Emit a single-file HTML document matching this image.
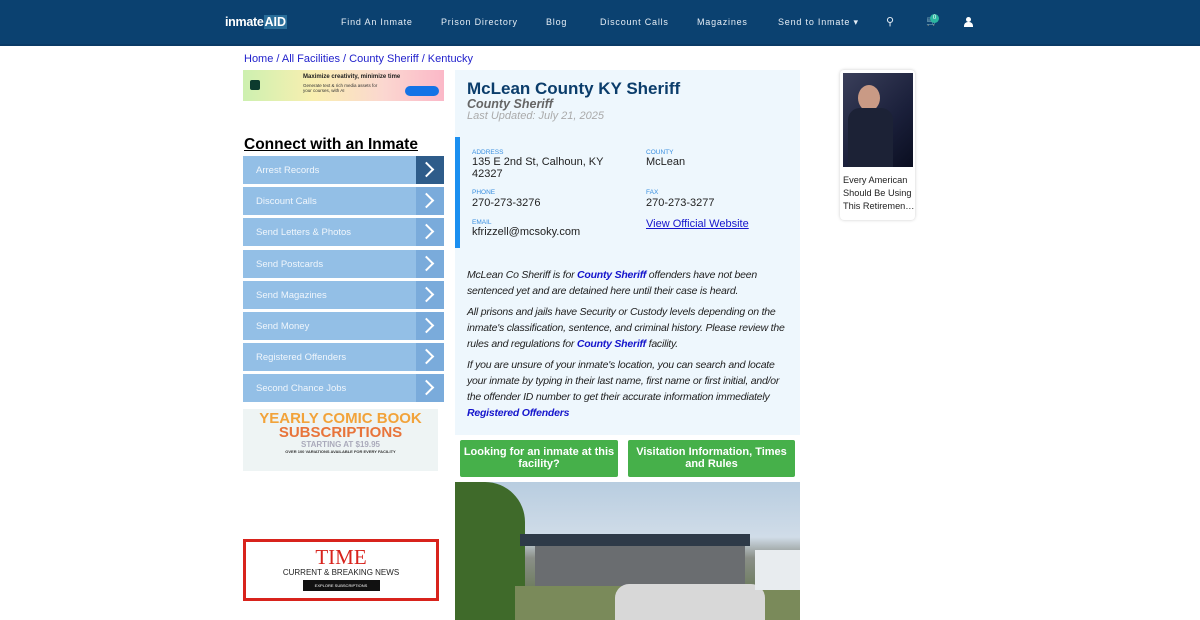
<!DOCTYPE html>
<html><head><meta charset="utf-8">
<style>
*{box-sizing:border-box;margin:0;padding:0}
body{width:1200px;height:620px;overflow:hidden;background:#fff;font-family:"Liberation Sans",sans-serif;position:relative}
.nav{position:absolute;left:0;top:0;width:1200px;height:46px;background:#0b4170;border-bottom:2px solid #0a3a66}
.nav span{position:absolute;top:17px;color:#e6eef6;font-size:9px;letter-spacing:.8px}
.logo{position:absolute;left:225px;top:15px;color:#fff;font-size:12.5px;font-weight:bold;letter-spacing:-.3px}
.bc{position:absolute;left:244px;top:53px;font-size:11px;color:#2222cc}
.ad1{position:absolute;left:243px;top:70px;width:201px;height:31px;background:linear-gradient(90deg,#cdf0b0,#f9efb0 35%,#fbd7d0 70%,#fbb8c8)}
h2{position:absolute;left:244px;top:136px;font-size:15.5px;text-decoration:underline;color:#000}
.menu{position:absolute;left:243px;top:156px;width:201px}
.menu div{height:28px;margin-bottom:3.2px;background:#93bfe6;position:relative;color:#f0f6fc;font-size:9.5px;line-height:29px;padding-left:13px}
.menu div:after{content:"";position:absolute;right:0;top:0;width:28px;height:28px;background:#7aabdb}
.menu div:before{content:"";position:absolute;right:12px;top:8px;width:9px;height:9px;border-right:2px solid #fff;border-top:2px solid #fff;transform:rotate(45deg);z-index:1}
.menu div.a:after{background:#2e5c8a}
.comic{position:absolute;left:243px;top:409px;width:195px;height:62px;background:#eef4f4;text-align:center;font-weight:bold}
.time{position:absolute;left:243px;top:539px;width:196px;height:62px;border:3px solid #d8231c;text-align:center}
.main{position:absolute;left:455px;top:70px;width:345px;height:365px;background:#eef7fd}
.title{position:absolute;left:467px;top:79px;font-size:17px;font-weight:bold;color:#0b3d6b}
.sub{position:absolute;left:467px;top:97px;font-size:12.5px;font-weight:bold;font-style:italic;color:#666}
.upd{position:absolute;left:467px;top:110px;font-size:11px;font-style:italic;color:#aaa}
.bar{position:absolute;left:455px;top:137px;width:5px;height:111px;background:#1b8ff0}
.lab{position:absolute;font-size:6.5px;color:#3a8fe0}
.val{position:absolute;font-size:11px;color:#222;line-height:11.5px}
.desc{position:absolute;left:467px;top:267px;width:325px;font-size:10.5px;letter-spacing:-.22px;font-style:italic;line-height:16px;color:#222}
.desc p{margin-bottom:5px}
.desc b{color:#1515cc}
.btn{position:absolute;top:440px;height:37px;background:#46b04a;color:#fff;font-weight:bold;font-size:11px;text-align:center;line-height:12px;padding-top:6px;border-radius:2px}
.photo{position:absolute;left:455px;top:482px;width:345px;height:138px;background:linear-gradient(180deg,#b8cde0 0,#d0dce8 40%,#8a8f88 55%,#6a7a5a 80%,#5a7040);overflow:hidden}
.card{position:absolute;left:840px;top:70px;width:75px;height:150px;border-radius:4px;box-shadow:0 0 3px #ccc}
</style></head><body>
<div class="nav">
<div class="logo">inmate<span style="position:static;font-size:12.5px;color:#fff;letter-spacing:0;background:#2a6e9a;padding:0 1px">AID</span></div>
<span style="left:341px">Find An Inmate</span>
<span style="left:441px">Prison Directory</span>
<span style="left:546px">Blog</span>
<span style="left:600px">Discount Calls</span>
<span style="left:697px">Magazines</span>
<span style="left:778px">Send to Inmate ▾</span>
<span style="left:886px;top:15px;font-size:11px">⚲</span>
<span style="left:926px;top:16px;font-size:10px">🛒</span>
<div style="position:absolute;left:930px;top:14px;width:9px;height:9px;border-radius:50%;background:#2bb5a0;color:#fff;font-size:6px;text-align:center;line-height:9px">0</div>
<div style="position:absolute;left:966px;top:17px;width:5px;height:5px;border-radius:50%;background:#fff"></div>
<div style="position:absolute;left:964px;top:22px;width:9px;height:5px;border-radius:4px 4px 0 0;background:#fff"></div>
</div>
<div class="bc">Home / All Facilities / County Sheriff / Kentucky</div>
<div class="ad1"><div style="position:absolute;left:7px;top:10px;width:10px;height:10px;background:#0d3b2e;border-radius:2px"></div><div style="position:absolute;left:60px;top:4px;font-size:6px;font-weight:bold;color:#222">Maximize creativity, minimize time</div><div style="position:absolute;left:60px;top:13px;font-size:4.5px;color:#333;width:80px">Generate text &amp; rich media assets for your courses, with AI</div><div style="position:absolute;left:162px;top:16px;width:34px;height:10px;border-radius:5px;background:#1473e6"></div></div>
<h2>Connect with an Inmate</h2>
<div class="menu">
<div class="a">Arrest Records</div><div>Discount Calls</div><div>Send Letters &amp; Photos</div><div>Send Postcards</div><div>Send Magazines</div><div>Send Money</div><div>Registered Offenders</div><div>Second Chance Jobs</div>
</div>
<div class="comic"><div style="font-size:15px;color:#f2a33a;line-height:14px;padding-top:3px">YEARLY COMIC BOOK</div><div style="font-size:15px;color:#e8743a;line-height:14px">SUBSCRIPTIONS</div><div style="font-size:8px;color:#aab">STARTING AT $19.95</div><div style="font-size:4px;color:#333">OVER 100 VARIATIONS AVAILABLE FOR EVERY FACILITY</div></div>
<div class="time"><div style="font-family:'Liberation Serif',serif;color:#d8231c;font-size:21px;line-height:22px;margin-top:4px">TIME</div><div style="font-size:8px;color:#222">CURRENT &amp; BREAKING NEWS</div><div style="margin:3px auto 0;width:77px;height:11px;background:#111;color:#fff;font-size:4px;line-height:11px">EXPLORE SUBSCRIPTIONS</div></div>
<div class="main"></div>
<div class="title">McLean County KY Sheriff</div>
<div class="sub">County Sheriff</div>
<div class="upd">Last Updated: July 21, 2025</div>
<div class="bar"></div>
<div class="lab" style="left:472px;top:149px">ADDRESS</div><div class="val" style="left:472px;top:157px">135 E 2nd St, Calhoun, KY<br>42327</div>
<div class="lab" style="left:646px;top:149px">COUNTY</div><div class="val" style="left:646px;top:157px">McLean</div>
<div class="lab" style="left:472px;top:189px">PHONE</div><div class="val" style="left:472px;top:198px">270-273-3276</div>
<div class="lab" style="left:646px;top:189px">FAX</div><div class="val" style="left:646px;top:198px">270-273-3277</div>
<div class="lab" style="left:472px;top:219px">EMAIL</div><div class="val" style="left:472px;top:227px">kfrizzell@mcsoky.com</div>
<div class="val" style="left:646px;top:219px;color:#1515cc;text-decoration:underline">View Official Website</div>
<div class="desc"><p>McLean Co Sheriff is for <b>County Sheriff</b> offenders have not been sentenced yet and are detained here until their case is heard.</p><p>All prisons and jails have Security or Custody levels depending on the inmate's classification, sentence, and criminal history. Please review the rules and regulations for <b>County Sheriff</b> facility.</p><p>If you are unsure of your inmate's location, you can search and locate your inmate by typing in their last name, first name or first initial, and/or the offender ID number to get their accurate information immediately <b>Registered Offenders</b></p></div>
<div class="btn" style="left:460px;width:158px">Looking for an inmate at this facility?</div>
<div class="btn" style="left:628px;width:167px">Visitation Information, Times and Rules</div>
<div class="photo"><div style="position:absolute;left:0;top:0;width:70px;height:138px;background:#3f6a2a;border-radius:0 40px 0 0"></div><div style="position:absolute;left:65px;top:52px;width:230px;height:12px;background:#2e3a48"></div><div style="position:absolute;left:80px;top:64px;width:210px;height:40px;background:#6a6d70"></div><div style="position:absolute;left:60px;top:104px;width:285px;height:34px;background:#7a8a5a"></div><div style="position:absolute;left:160px;top:102px;width:150px;height:36px;background:#d8d8d8;border-radius:14px 14px 0 0"></div><div style="position:absolute;left:300px;top:68px;width:45px;height:40px;background:#e8ecef"></div></div>
<div class="card"><div style="position:absolute;left:3px;top:3px;width:70px;height:94px;background:linear-gradient(135deg,#3a3f5a,#1a1f3a 60%,#0a0e20)"></div><div style="position:absolute;left:18px;top:15px;width:22px;height:26px;border-radius:50%;background:#c99a85"></div><div style="position:absolute;left:8px;top:38px;width:45px;height:59px;background:#1c2236;border-radius:12px 12px 0 0"></div><div style="position:absolute;left:3px;top:104px;font-size:9.2px;line-height:13px;color:#222;width:72px">Every American Should Be Using This Retiremen…</div></div>
</body></html>
